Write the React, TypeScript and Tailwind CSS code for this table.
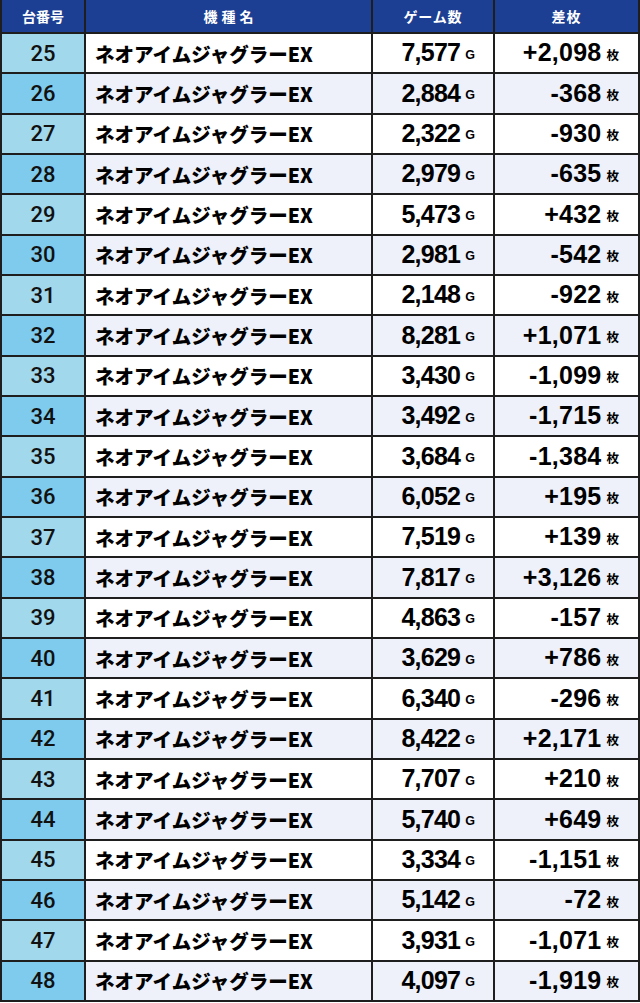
import React from 'react';

interface Row {
  no: number;
  games: string;
  diff: string;
}

const MACHINE = 'ネオアイムジャグラーEX';

const rows: Row[] = [
  { no: 25, games: '7,577', diff: '+2,098' },
  { no: 26, games: '2,884', diff: '-368' },
  { no: 27, games: '2,322', diff: '-930' },
  { no: 28, games: '2,979', diff: '-635' },
  { no: 29, games: '5,473', diff: '+432' },
  { no: 30, games: '2,981', diff: '-542' },
  { no: 31, games: '2,148', diff: '-922' },
  { no: 32, games: '8,281', diff: '+1,071' },
  { no: 33, games: '3,430', diff: '-1,099' },
  { no: 34, games: '3,492', diff: '-1,715' },
  { no: 35, games: '3,684', diff: '-1,384' },
  { no: 36, games: '6,052', diff: '+195' },
  { no: 37, games: '7,519', diff: '+139' },
  { no: 38, games: '7,817', diff: '+3,126' },
  { no: 39, games: '4,863', diff: '-157' },
  { no: 40, games: '3,629', diff: '+786' },
  { no: 41, games: '6,340', diff: '-296' },
  { no: 42, games: '8,422', diff: '+2,171' },
  { no: 43, games: '7,707', diff: '+210' },
  { no: 44, games: '5,740', diff: '+649' },
  { no: 45, games: '3,334', diff: '-1,151' },
  { no: 46, games: '5,142', diff: '-72' },
  { no: 47, games: '3,931', diff: '-1,071' },
  { no: 48, games: '4,097', diff: '-1,919' },
];

const jp = "font-['Noto_Sans_CJK_JP',sans-serif]";
const num = "font-['Liberation_Sans','Noto_Sans_CJK_JP',sans-serif]";

export default function App() {
  return (
    <div className="w-[640px] h-[1003px] bg-white">
      <div className="grid grid-cols-[82px_285px_120px_143px] grid-rows-[32px_repeat(24,minmax(0,1fr))] gap-[2px] h-[1002px] bg-[#1e1e1e] px-[2px] pb-[2px]">
        {/* ---------- HEADER ---------- */}
        <div className={`bg-[#1d3f93] text-white text-[14px] font-bold flex items-center justify-center ${jp}`}>
          台番号
        </div>
        <div className={`bg-[#1d3f93] text-white text-[14px] font-bold flex items-center justify-center tracking-[0.28em] pl-[0.28em] ${jp}`}>
          機種名
        </div>
        <div className={`bg-[#1d3f93] text-white text-[14px] font-bold flex items-center justify-center tracking-[0.06em] ${jp}`}>
          ゲーム数
        </div>
        <div className={`bg-[#1d3f93] text-white text-[14px] font-bold flex items-center justify-center tracking-[0.08em] ${jp}`}>
          差枚
        </div>

        {/* ---------- ROWS ---------- */}
        {rows.map((r, i) => {
          const alt = i % 2 === 1;
          const cell = alt ? 'bg-[#eef1f9]' : 'bg-white';
          return (
            <React.Fragment key={r.no}>
              <div
                className={`${alt ? 'bg-[#7ecbee]' : 'bg-[#a1d8ec]'} flex items-center justify-center text-[22px] font-medium text-[#111] font-['Roboto',sans-serif]`}
              >
                {r.no}
              </div>
              <div className={`${cell} flex items-center pl-[9px] text-[19.5px] font-black text-black ${jp}`}>
                {MACHINE}
              </div>
              <div className={`${cell} flex items-center justify-end pr-[18px] text-black ${num}`}>
                <span className="text-[25px] font-bold tracking-[-0.03em]">{r.games}</span>
                <span className="text-[12.5px] font-bold ml-[5px] mt-[4px]">G</span>
              </div>
              <div className={`${cell} flex items-center justify-end pr-[19px] text-black ${num}`}>
                <span className="text-[25px] font-bold tracking-[0.01em]">{r.diff}</span>
                <span className={`text-[12.5px] font-bold ml-[5px] mt-[4px] ${jp}`}>枚</span>
              </div>
            </React.Fragment>
          );
        })}
      </div>
    </div>
  );
}
